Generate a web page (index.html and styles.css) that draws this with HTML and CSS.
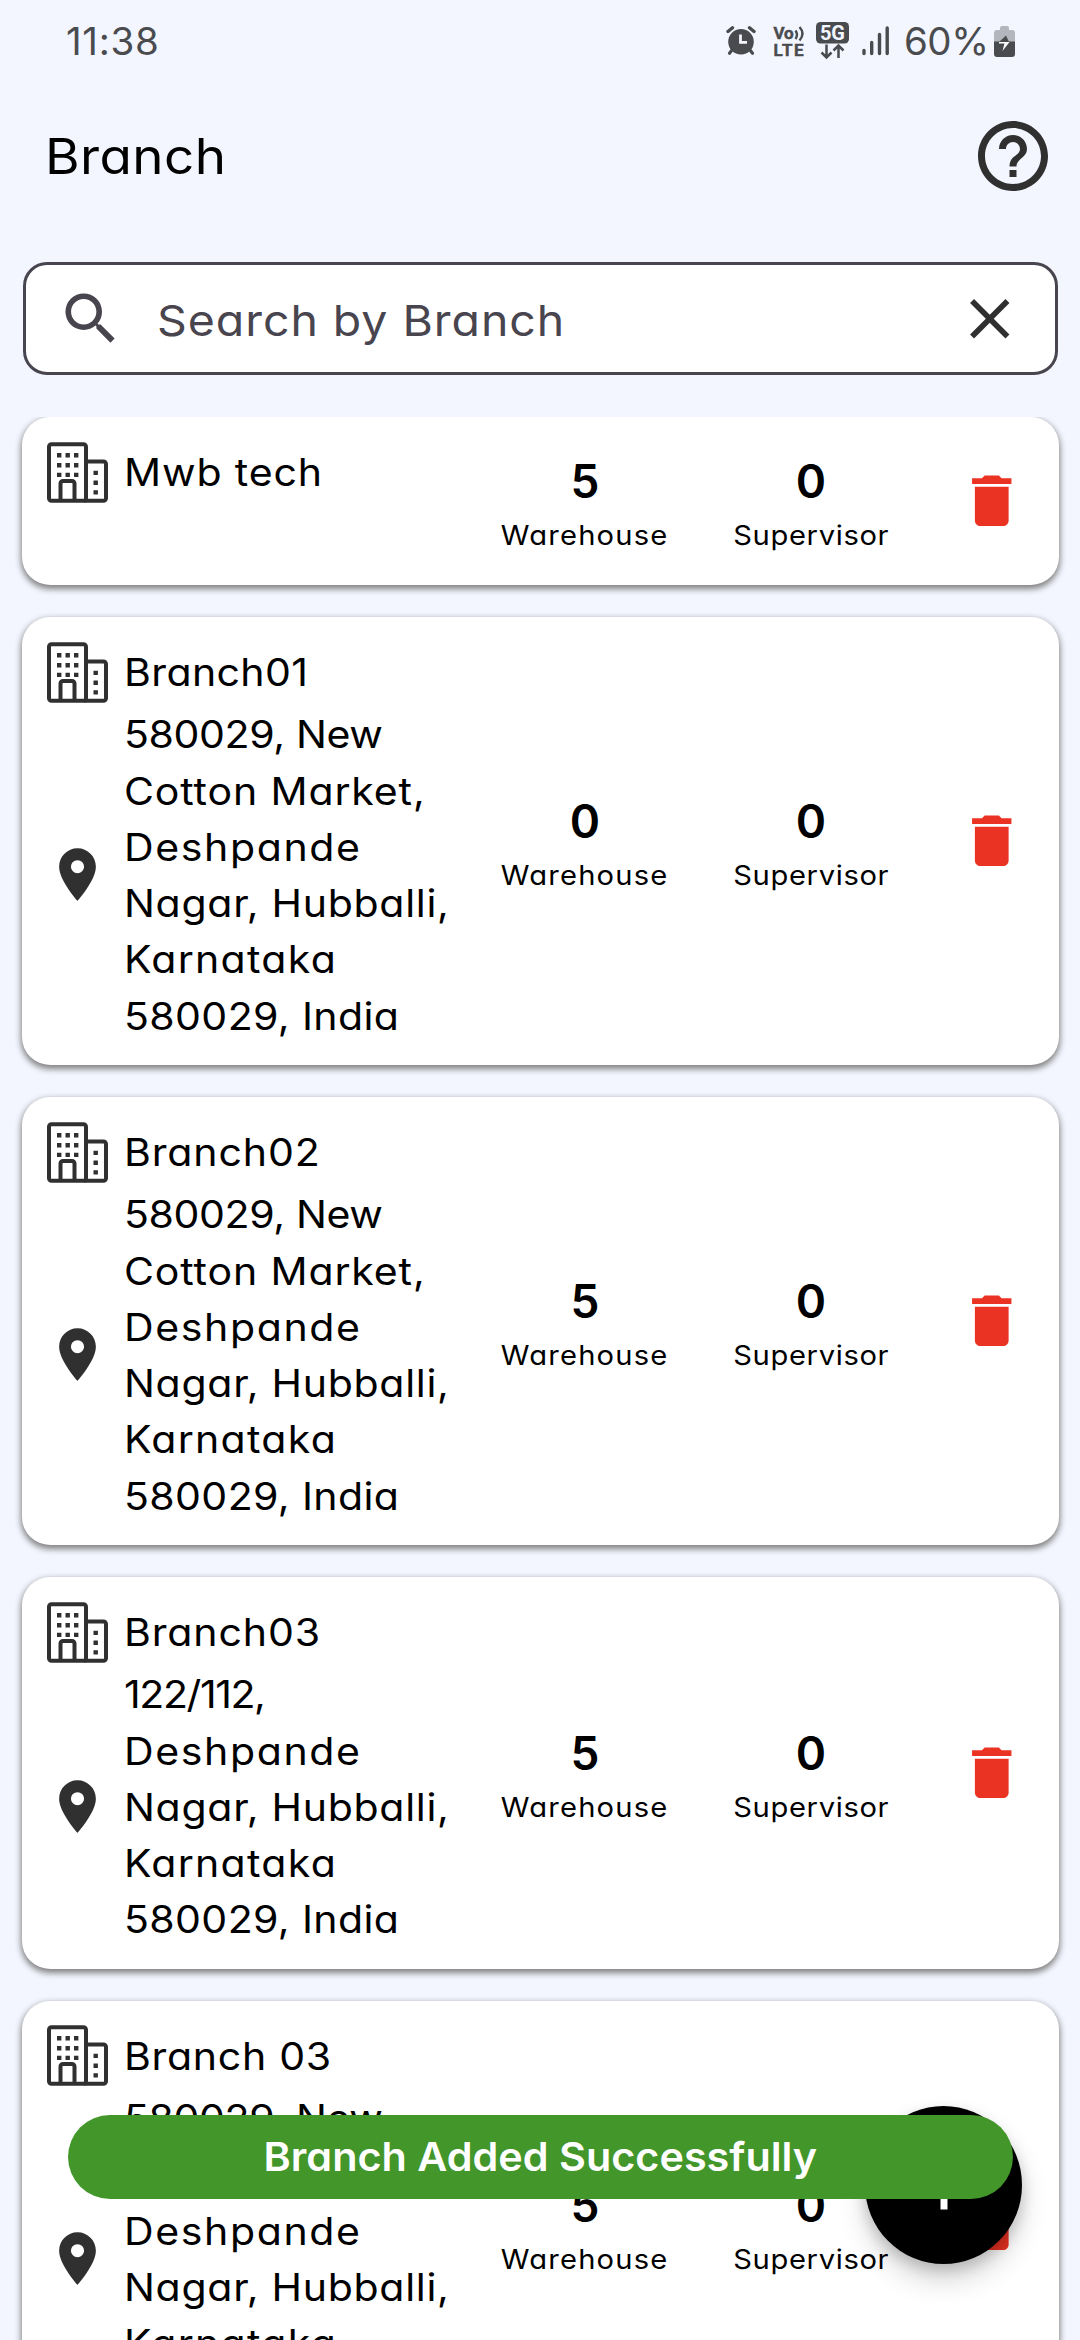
FILE: index.html
```html
<!DOCTYPE html>
<html lang="en">
<head>
<meta charset="utf-8">
<title>Branch</title>
<link rel="stylesheet" href="styles.css">
</head>
<body>
<svg class="sprite" aria-hidden="true">
  <symbol id="building" viewBox="0 0 63 63">
    <g fill="none" stroke="#303030" stroke-width="4" stroke-linejoin="round">
      <rect x="3" y="3.200" width="37" height="56.600" rx="2.500"/>
      <path d="M40 20.500h17.500a2.500 2.500 0 0 1 2.500 2.500v34.300a2.500 2.500 0 0 1-2.500 2.500H38"/>
      <path d="M14.500 59V42.500a2.500 2.500 0 0 1 2.500-2.500h9a2.500 2.500 0 0 1 2.500 2.500V59"/>
    </g>
    <path fill="#303030" d="M11 12h4.400v4.400H11zM19.500 12h4.400v4.400h-4.400zM28 12h4.400v4.400H28zM11 22h4.400v4.400H11zM19.500 22h4.400v4.400h-4.400zM28 22h4.400v4.400H28zM11 31.700h4.400v4.400H11zM19.500 31.700h4.400v4.400h-4.400zM28 31.700h4.400v4.400H28zM47.500 29.700h4.400v4.400h-4.400zM47.500 39.500h4.400v4.400h-4.400zM47.500 49.200h4.400v4.400h-4.400z"/>
  </symbol>
  <symbol id="pin" viewBox="0 0 24 24"><path fill="#303030" d="M12 2C8.130 2 5 5.130 5 9c0 5.250 7 13 7 13s7-7.750 7-13c0-3.870-3.130-7-7-7zm0 9.500a2.500 2.500 0 1 1 0-5 2.500 2.500 0 0 1 0 5z"/></symbol>
  <symbol id="trash" viewBox="0 0 24 24"><path fill="#eb3323" d="M6 19c0 1.100.9 2 2 2h8c1.100 0 2-.9 2-2V7H6v12zM19 4h-3.500l-1-1h-5l-1 1H5v2h14V4z"/></symbol>
</svg>

<header class="status">
  <span class="clock">11:38</span>
  <div class="status-icons">
    <svg class="alarm" width="30" height="30" viewBox="0 0 30 30">
      <circle cx="15" cy="15.800" r="12.800" fill="#4a4b4e"/>
      <path d="M2 5.500 6.500 1.800M28 5.500 23.500 1.800" stroke="#4a4b4e" stroke-width="3.400" stroke-linecap="round"/>
      <path d="m6 24-2.500 3.200M24 24l2.500 3.200" stroke="#4a4b4e" stroke-width="3.200" stroke-linecap="round"/>
      <path d="M14.500 8.500v7.800h6.500" fill="none" stroke="#f3f6ff" stroke-width="2.800"/>
    </svg>
    <svg class="volte" width="33" height="33" viewBox="0 0 33 33">
      <text x="0.500" y="14" textLength="20">Vo</text>
      <text x="0.500" y="31" textLength="30">LTE</text>
      <path d="M22.500 5.500q3 4 0 8.500M26.500 2q6 6.500 0 13.500" fill="none" stroke="#4a4b4e" stroke-width="2.400"/>
    </svg>
    <svg class="fiveg" width="33" height="38" viewBox="0 0 33 38">
      <rect width="33" height="21.500" rx="4.500" fill="#4a4b4e"/>
      <text x="4" y="17.800" textLength="25">5G</text>
      <path d="M10.500 22.500v12.500M5.500 30.500l5 5 5-5M22.500 36V24M17.500 28.500l5-5 5 5" fill="none" stroke="#4a4b4e" stroke-width="2.500"/>
    </svg>
    <svg class="signal" width="28" height="30" viewBox="0 0 28 30">
      <path d="M2 24.500v3M9.700 16.500v11M17.500 8.500v19M25.200 2v25.500" stroke="#4a4b4e" stroke-width="3.400" stroke-linecap="round"/>
    </svg>
    <span class="percent">60%</span>
    <svg class="battery" width="21" height="32" viewBox="0 0 21 32">
      <path d="M6 3a2 2 0 0 1 2-2h5a2 2 0 0 1 2 2v2h3a3 3 0 0 1 3 3v9H0V8a3 3 0 0 1 3-3h3z" fill="#b4b6bd"/>
      <path d="M0 16.500h21V29a3 3 0 0 1-3 3H3a3 3 0 0 1-3-3z" fill="#4a4b4e"/>
      <path d="M12 10.500 5 17h10z" fill="#4a4b4e"/>
      <path d="M5 17h10.500L8.500 26l2-7.500H5z" fill="#fff"/>
    </svg>
  </div>
</header>

<div class="titlebar">
  <h1>Branch</h1>
  <svg width="84" height="84" viewBox="0 0 24 24"><path fill="#303030" d="M11 18h2v-2h-2v2zm1-16C6.480 2 2 6.480 2 12s4.480 10 10 10 10-4.480 10-10S17.520 2 12 2zm0 18c-4.410 0-8-3.590-8-8s3.590-8 8-8 8 3.590 8 8-3.590 8-8 8zm0-14c-2.210 0-4 1.790-4 4h2c0-1.100.9-2 2-2s2 .9 2 2c0 2-3 1.750-3 5h2c0-2.250 3-2.500 3-5 0-2.210-1.790-4-4-4z"/></svg>
</div>

<div class="search">
  <svg width="67.500" height="67.500" viewBox="0 0 24 24"><path fill="#49454f" d="M15.500 14h-.790l-.280-.270A6.471 6.471 0 0 0 16 9.500 6.500 6.500 0 1 0 9.500 16c1.610 0 3.090-.590 4.230-1.570l.270.280v.790l5 4.990L20.490 19l-4.990-5zm-6 0C7.010 14 5 11.990 5 9.500S7.010 5 9.500 5 14 7.010 14 9.500 11.990 14 9.500 14z"/></svg>
  <span class="placeholder">Search by Branch</span>
  <svg width="67.500" height="67.500" viewBox="0 0 24 24"><path fill="#303030" d="M19 6.410 17.590 5 12 10.590 6.410 5 5 6.410 10.590 12 5 17.590 6.410 19 12 13.410 17.590 19 19 17.590 13.410 12z"/></svg>
</div>

<main class="list">
  <article class="card short">
    <div class="info">
      <div class="row name"><svg class="building"><use href="#building"/></svg><span class="track-wide">Mwb tech</span></div>
    </div>
    <div class="stat"><b>5</b><span class="warehouse">Warehouse</span></div>
    <div class="stat"><b>0</b><span class="supervisor">Supervisor</span></div>
    <svg class="trash"><use href="#trash"/></svg>
  </article>

  <article class="card">
    <div class="info">
      <div class="row name"><svg class="building"><use href="#building"/></svg><span class="track-close">Branch01</span></div>
      <div class="row"><svg class="pin"><use href="#pin"/></svg>
        <p><span class="track-tight">580029, New</span><span class="track-wide">Cotton Market,</span><span class="track-widest">Deshpande</span><span>Nagar, Hubballi,</span><span class="track-wider">Karnataka</span><span class="track-close">580029, India</span></p></div>
    </div>
    <div class="stat"><b>0</b><span class="warehouse">Warehouse</span></div>
    <div class="stat"><b>0</b><span class="supervisor">Supervisor</span></div>
    <svg class="trash"><use href="#trash"/></svg>
  </article>

  <article class="card">
    <div class="info">
      <div class="row name"><svg class="building"><use href="#building"/></svg><span class="track-wide">Branch02</span></div>
      <div class="row"><svg class="pin"><use href="#pin"/></svg>
        <p><span class="track-tight">580029, New</span><span class="track-wide">Cotton Market,</span><span class="track-widest">Deshpande</span><span>Nagar, Hubballi,</span><span class="track-wider">Karnataka</span><span class="track-close">580029, India</span></p></div>
    </div>
    <div class="stat"><b>5</b><span class="warehouse">Warehouse</span></div>
    <div class="stat"><b>0</b><span class="supervisor">Supervisor</span></div>
    <svg class="trash"><use href="#trash"/></svg>
  </article>

  <article class="card">
    <div class="info">
      <div class="row name"><svg class="building"><use href="#building"/></svg><span class="track-wide">Branch03</span></div>
      <div class="row"><svg class="pin"><use href="#pin"/></svg>
        <p><span class="track-min">122/112,</span><span class="track-widest">Deshpande</span><span>Nagar, Hubballi,</span><span class="track-wider">Karnataka</span><span class="track-close">580029, India</span></p></div>
    </div>
    <div class="stat"><b>5</b><span class="warehouse">Warehouse</span></div>
    <div class="stat"><b>0</b><span class="supervisor">Supervisor</span></div>
    <svg class="trash"><use href="#trash"/></svg>
  </article>

  <article class="card">
    <div class="info">
      <div class="row name"><svg class="building"><use href="#building"/></svg><span>Branch 03</span></div>
      <div class="row"><svg class="pin"><use href="#pin"/></svg>
        <p><span class="track-tight">580029, New</span><span class="track-wide">Cotton Market,</span><span class="track-widest">Deshpande</span><span>Nagar, Hubballi,</span><span class="track-wider">Karnataka</span><span class="track-close">580029, India</span></p></div>
    </div>
    <div class="stat"><b>5</b><span class="warehouse">Warehouse</span></div>
    <div class="stat"><b>0</b><span class="supervisor">Supervisor</span></div>
    <svg class="trash"><use href="#trash"/></svg>
  </article>
</main>

<div class="fab"><svg width="84" height="84" viewBox="0 0 24 24"><path fill="#fff" d="M19 13h-6v6h-2v-6H5v-2h6V5h2v6h6v2z"/></svg></div>
<div class="snackbar"><span>Branch Added Successfully</span></div>
</body>
</html>
```
FILE: styles.css
```css
* { box-sizing: border-box; }

body {
  margin: 0;
  width: 1080px;
  height: 2340px;
  overflow: hidden;
  position: relative;
  display: flex;
  flex-direction: column;
  background: #f3f6ff;
  color: #000;
  font-family: Inter, "Open Sans", sans-serif;
  font-feature-settings: "cv11";
}

svg { display: block; flex: none; }
.sprite { position: absolute; width: 0; height: 0; }

/* status bar */
.status {
  height: 82px;
  flex: none;
  display: flex;
  justify-content: space-between;
  align-items: center;
  padding: 0 65px 0 66px;
  color: #4a4b4e;
  font-size: 38.500px;
  font-weight: 380;
}
.clock { letter-spacing: .700px; }
.status-icons { display: flex; align-items: center; }
.alarm { margin-right: 17px; }
.volte { margin-right: 10px; }
.fiveg { margin-right: 13px; }
.signal { margin-right: 14px; }
.percent { width: 90px; letter-spacing: -.500px; }
.volte text { font: 600 17px Roboto, sans-serif; fill: #4a4b4e; stroke: #4a4b4e; stroke-width: .600px; }
.fiveg text { font: 700 20px Roboto, sans-serif; fill: #f3f6ff; }

/* wide letterforms for all interface text */
h1, .placeholder, .row span { transform: scaleX(1.080); transform-origin: left center; }
.stat span { transform: scaleX(1.080); }

/* title */
.titlebar {
  height: 148px;
  flex: none;
  display: flex;
  align-items: center;
  justify-content: space-between;
  padding: 0 25.500px 0 44.500px;
}
h1 {
  margin: 0;
  font-size: 49px;
  font-weight: 380;
  letter-spacing: .400px;
}

/* search */
.search {
  flex: none;
  height: 113px;
  margin: 32px 22.500px 42px;
  padding: 0 31px;
  border: 3px solid #49454f;
  border-radius: 24px;
  background: #fff;
  display: flex;
  align-items: center;
}
.placeholder {
  flex: 1;
  padding: 2px 0 0 0;
  margin-left: 32.500px;
  font-size: 43px;
  font-weight: 370;
  letter-spacing: .900px;
  color: #49454f;
}

/* branch cards */
.list {
  flex: 1;
  min-height: 0;
  overflow: hidden;
  display: flex;
  flex-direction: column;
  gap: 32px;
  padding: 0 21.500px;
}
.card {
  flex: none;
  display: grid;
  grid-template-columns: 450.500px 226px 226px 1fr;
  align-items: center;
  padding: 21px 0;
  border-radius: 28px;
  background: #fff;
  box-shadow: 0 3px 6px 1px #808080;
}
.short { height: 167.800px; }
.info { align-self: start; padding-left: 24px; }
.row { display: flex; align-items: center; gap: 15.500px; }
.row > svg { width: 63px; }
.name { height: 68.500px; }
.building { height: 63px; }
.row > .pin { height: 67.200px; }
.row p { margin: 0; }
.row span {
  display: block;
  font-size: 38px;
  font-weight: 370;
  line-height: 56.250px;
  letter-spacing: .650px;
  white-space: nowrap;
}
.row .track-min { letter-spacing: -1.300px; }
.row .track-tight { letter-spacing: -.350px; }
.row .track-close { letter-spacing: .350px; }
.row .track-wide { letter-spacing: .800px; }
.row .track-wider { letter-spacing: 1.200px; }
.row .track-widest { letter-spacing: 1.500px; }

.stat { display: flex; flex-direction: column; align-items: center; }
.stat b { font-size: 46px; font-weight: 600; line-height: 70px; }
.stat span { font-size: 27px; font-weight: 370; line-height: 40px; }
.stat .warehouse { letter-spacing: 1.100px; }
.stat .supervisor { letter-spacing: .600px; }
.trash { width: 67.500px; height: 67.500px; justify-self: center; }

/* overlays */
.fab {
  position: absolute;
  left: 865px;
  top: 2106px;
  width: 157px;
  height: 158px;
  border-radius: 50%;
  background: #000;
  display: grid;
  place-items: center;
  box-shadow: 0 16px 28px rgba(0, 0, 0, .16), 0 6px 14px rgba(0, 0, 0, .18);
}
.snackbar {
  position: absolute;
  left: 68px;
  top: 2115px;
  width: 945px;
  height: 84px;
  border-radius: 42px;
  background: #439629;
  color: #fff;
  display: flex;
  align-items: center;
  justify-content: center;
  font-size: 39.500px;
  font-weight: 600;
}
.snackbar span { transform: scaleX(1.047); }
```
